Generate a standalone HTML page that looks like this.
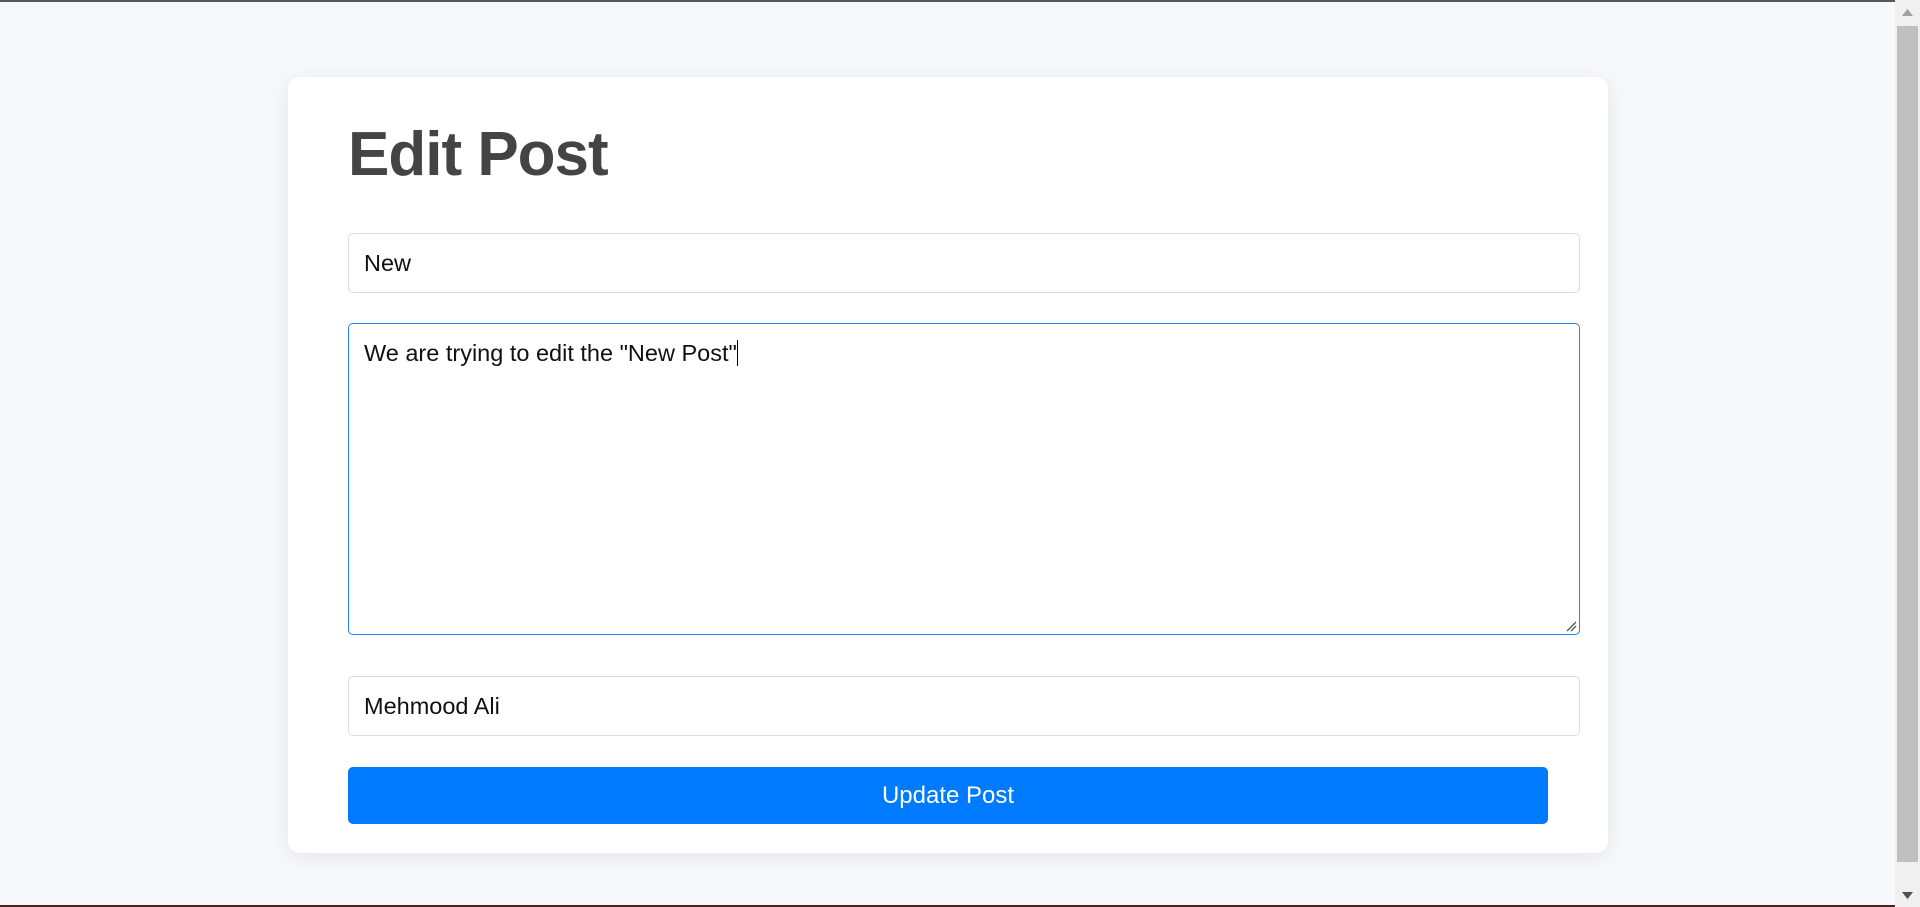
<!DOCTYPE html>
<html><head><meta charset="utf-8"><style>
*{box-sizing:border-box;margin:0;padding:0}
html,body{width:1920px;height:907px;overflow:hidden;background:#f7f8fb;font-family:"Liberation Sans",Arial,sans-serif}
.topline{position:absolute;left:0;top:0;width:1920px;height:2px;background:#55575b}
.botline{position:absolute;left:0;top:905px;width:1895px;height:2px;background:#4a2424}
.card{position:absolute;left:288px;top:77px;width:1320px;height:776px;background:#fff;border-radius:12px;box-shadow:0 4px 20px rgba(0,0,0,0.08)}
h1{position:absolute;left:348px;top:119px;font-size:62px;font-weight:bold;color:#444;line-height:72px;letter-spacing:-1px}
.field{position:absolute;left:348px;width:1232px;border:1px solid #dcdcdc;border-radius:5px;background:#fff;font-size:23.5px;color:#111;padding-left:15px}
.in{height:60px;line-height:58px}
.ta{top:323px;height:312px;border:1px solid #1f84f5;padding-top:15px;line-height:28px}
.btn{position:absolute;left:348px;top:767px;width:1200px;height:57px;background:#007bff;border-radius:5px;color:#fff;font-size:24px;text-align:center;line-height:57px}
.sb{position:absolute;left:1895px;top:0;width:25px;height:907px;background:#f0f0f0}
.thumb{position:absolute;left:1897px;top:26px;width:21px;height:836px;background:#c0c0c0}
.caret{display:inline-block;width:1px;height:26px;background:#000;vertical-align:-5px}
</style></head><body>
<div class="topline"></div>
<div class="card"></div>
<h1>Edit Post</h1>
<div class="field in" style="top:233px">New</div>
<div class="field ta">We are trying to edit the "New Post"<span class="caret"></span>
<svg style="position:absolute;right:2px;bottom:2px" width="12" height="12"><path d="M11 2L2 11M11 6L6 11" stroke="#555" stroke-width="1.3"/></svg></div>
<div class="field in" style="top:676px">Mehmood Ali</div>
<div class="btn">Update Post</div>
<div class="sb"></div><div class="thumb"></div>
<svg style="position:absolute;left:1901px;top:8px" width="13" height="9"><path d="M6.5 1L12 8H1Z" fill="#a0a0a0"/></svg>
<svg style="position:absolute;left:1901px;top:891px" width="13" height="9"><path d="M1 1H12L6.5 8Z" fill="#505050"/></svg>
<div class="botline"></div>
</body></html>
